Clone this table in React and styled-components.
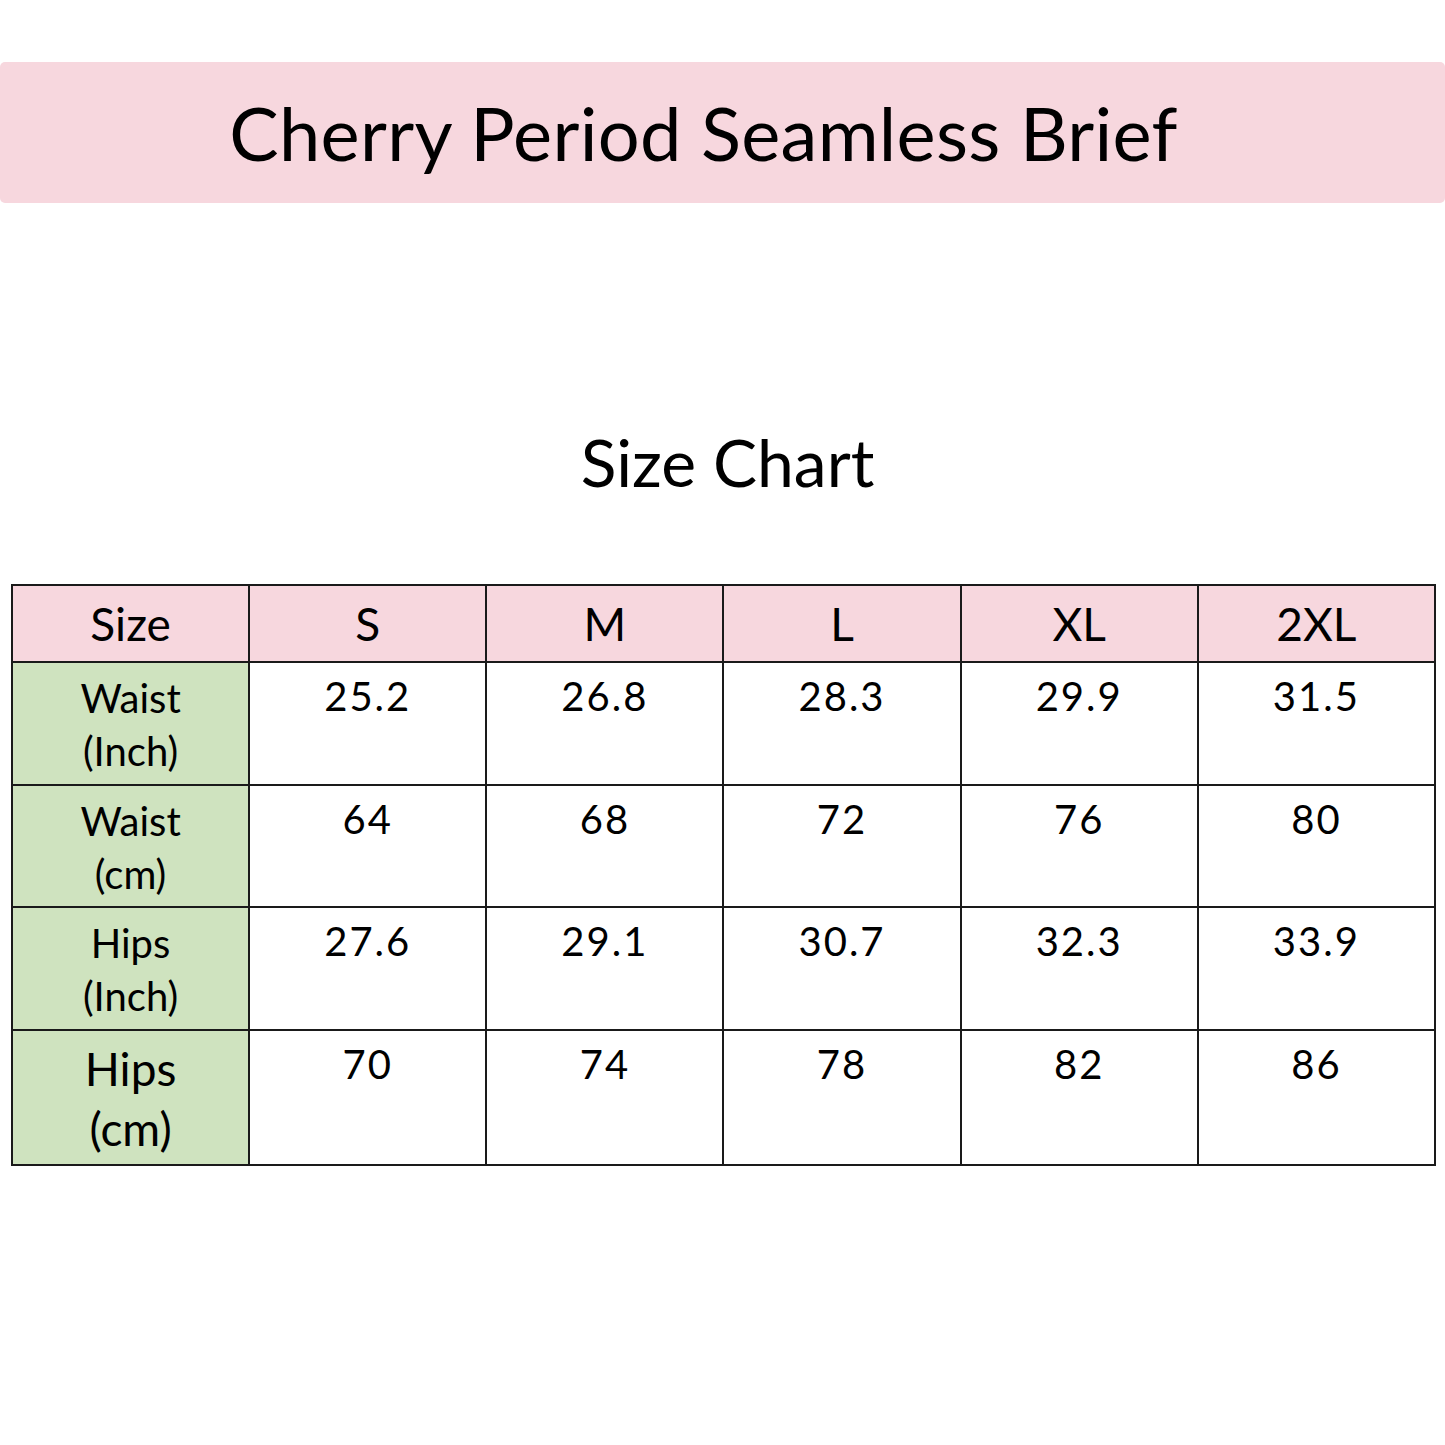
import React from 'react';
import styled, { createGlobalStyle } from 'styled-components';

const GlobalStyle = createGlobalStyle`
  body {
    margin: 0;
    background: #fff;
    font-family: Lato, "Open Sans", sans-serif;
    color: #000;
  }
`;

const Page = styled.div`
  width: 1445px;
  height: 1445px;
  padding-top: 62px;
  box-sizing: border-box;
`;

const Banner = styled.div`
  height: 141px;
  background: #f7d7de;
  border-radius: 5px;
  display: flex;
  align-items: center;
  justify-content: center;
  padding-right: 38px;
`;

const Title = styled.h1`
  margin: 0;
  font-weight: 400;
  font-size: 74px;
  letter-spacing: 0.3px;
  line-height: 1;
`;

const Heading = styled.h2`
  margin: 226px 0 0;
  text-align: center;
  font-weight: 400;
  font-size: 66px;
  line-height: 1;
  padding-left: 10px;
`;

const Table = styled.table`
  margin: 89px 0 0 11px;
  width: 1425px;
  border-collapse: collapse;
  table-layout: fixed;
`;

const HeadCell = styled.th`
  height: 75px;
  background: #f7d7de;
  border: 2px solid #1a1a1a;
  font-weight: 400;
  font-size: 46px;
  text-align: center;
  vertical-align: middle;
  padding: 0;
`;

const Label = styled.td`
  background: #cfe3bf;
  border: 2px solid #1a1a1a;
  text-align: center;
  vertical-align: top;
  padding: ${p => p.$big ? 8 : 9}px 0 0;
  font-size: ${p => p.$big ? 46 : 40}px;
  line-height: ${p => p.$big ? 60 : 53}px;
`;

const Value = styled.td`
  height: ${p => p.$h}px;
  border: 2px solid #1a1a1a;
  text-align: center;
  vertical-align: top;
  padding: 13px 0 0;
  font-size: 40px;
  line-height: 1;
  letter-spacing: 2px;
`;

const sizes = ['S', 'M', 'L', 'XL', '2XL'];

const rows = [
  { label: ['Waist', '(Inch)'], values: ['25.2', '26.8', '28.3', '29.9', '31.5'], h: 108 },
  { label: ['Waist', '(cm)'], values: ['64', '68', '72', '76', '80'], h: 107 },
  { label: ['Hips', '(Inch)'], values: ['27.6', '29.1', '30.7', '32.3', '33.9'], h: 108 },
  { label: ['Hips', '(cm)'], values: ['70', '74', '78', '82', '86'], h: 120, big: true },
];

export default function App() {
  return (
    <Page>
      <GlobalStyle />
      <Banner>
        <Title>Cherry Period Seamless Brief</Title>
      </Banner>
      <Heading>Size Chart</Heading>
      <Table>
        <thead>
          <tr>
            <HeadCell>Size</HeadCell>
            {sizes.map(s => <HeadCell key={s}>{s}</HeadCell>)}
          </tr>
        </thead>
        <tbody>
          {rows.map((r, i) => (
            <tr key={i}>
              <Label $big={r.big}>
                {r.label[0]}<br />{r.label[1]}
              </Label>
              {r.values.map((v, j) => <Value key={j} $h={r.h}>{v}</Value>)}
            </tr>
          ))}
        </tbody>
      </Table>
    </Page>
  );
}
